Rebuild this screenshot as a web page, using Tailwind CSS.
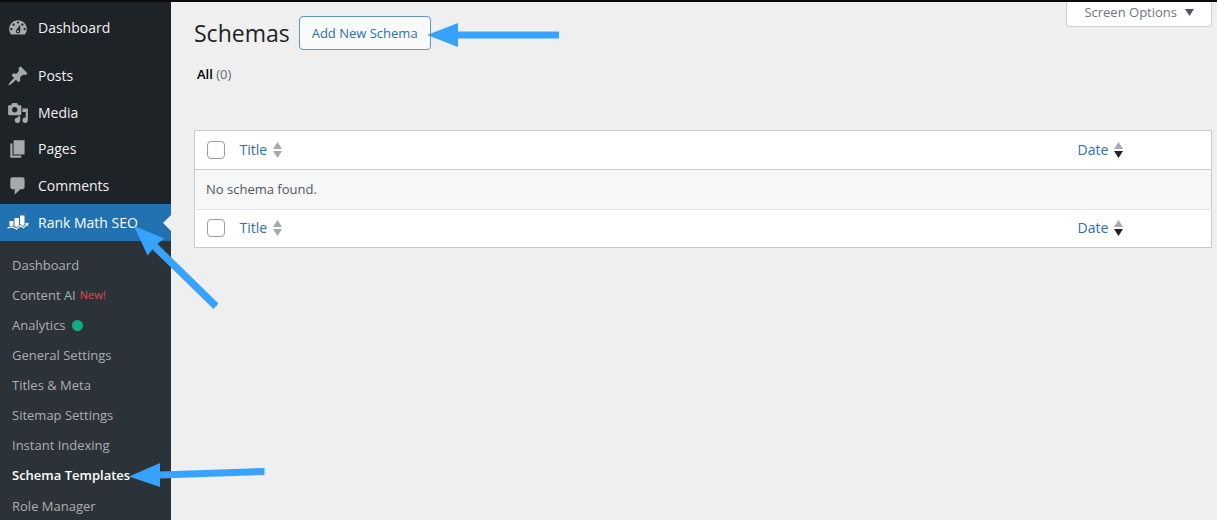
<!DOCTYPE html>
<html lang="en">
<head>
    <meta charset="utf-8">
    <title>Schemas</title>
    <meta name="viewport" content="width=device-width, initial-scale=1">
    <script src="https://cdn.jsdelivr.net/npm/@tailwindcss/browser@4"></script>
</head>
<body class="bg-[#efefef] font-['Open_Sans','Noto_Sans',sans-serif] text-sm text-[#50575e]">
    <div class="relative flex min-h-screen flex-col overflow-hidden">
        <!-- admin bar -->
        <div class="h-[2px] bg-[#0b0b0d]"></div>
        <div class="flex flex-1">
            <!-- sidebar -->
            <nav class="w-[171px] shrink-0 bg-[#2c3338] text-[#a9aeb3]">
                <ul class="bg-[#1d2327] pt-[7px] text-[#f0f0f1]">
                    <li class="mb-[11px]">
                        <a href="#" class="flex h-[37px] items-center gap-[9px] pl-[7px]">
                            <svg class="size-[22px] fill-[#a7aaad]" viewBox="0 0 20 20"><path d="M3.76 16h12.48c1.1-1.37 1.76-3.11 1.76-5 0-4.42-3.58-8-8-8s-8 3.58-8 8c0 1.89.66 3.63 1.76 5zM10 4c.55 0 1 .45 1 1s-.45 1-1 1-1-.45-1-1 .45-1 1-1zM6 6c.55 0 1 .45 1 1s-.45 1-1 1-1-.45-1-1 .45-1 1-1zm8 0c.55 0 1 .45 1 1s-.45 1-1 1-1-.45-1-1 .45-1 1-1zm-5.37 5.55L12 7v6c0 1.1-.9 2-2 2s-2-.9-2-2c0-.57.24-1.08.63-1.45zM4 10c.55 0 1 .45 1 1s-.45 1-1 1-1-.45-1-1 .45-1 1-1zm12 0c.55 0 1 .45 1 1s-.45 1-1 1-1-.45-1-1 .45-1 1-1zm-5 3c0-.55-.45-1-1-1s-1 .45-1 1 .45 1 1 1 1-.45 1-1z"/></svg>
                            Dashboard
                        </a>
                    </li>
                    <li>
                        <a href="#" class="flex h-[37px] items-center gap-[9px] pl-[7px]">
                            <svg class="size-[22px] fill-[#a7aaad]" viewBox="0 0 20 20"><path d="M10.44 3.02l1.82-1.82 6.36 6.35-1.83 1.82c-1.05-.68-2.48-.57-3.41.36l-.75.75c-.92.93-1.04 2.35-.35 3.41l-1.83 1.82-2.41-2.41-2.8 2.79c-.42.42-3.38 2.71-3.8 2.29s1.86-3.39 2.28-3.81l2.79-2.79L4.1 9.36l1.83-1.82c1.05.69 2.48.57 3.4-.36l.75-.75c.93-.92 1.05-2.35.36-3.41z"/></svg>
                            Posts
                        </a>
                    </li>
                    <li>
                        <a href="#" class="flex h-[37px] items-center gap-[9px] pl-[7px]">
                            <svg class="size-[22px] fill-[#a7aaad]" viewBox="0 0 20 20"><path d="M13 11V4c0-.55-.45-1-1-1h-1.67L9 1H5L3.67 3H2c-.55 0-1 .45-1 1v7c0 .55.45 1 1 1h10c.55 0 1-.45 1-1zM7 4.5c1.38 0 2.5 1.12 2.5 2.5S8.38 9.5 7 9.5 4.5 8.38 4.5 7 5.62 4.5 7 4.5zM14 6h5v10.5c0 1.38-1.12 2.5-2.5 2.5S14 17.88 14 16.5s1.12-2.5 2.5-2.5c.17 0 .34.02.5.05V9h-3V6zm-4 8.05V13h2v3.5c0 1.38-1.12 2.5-2.5 2.5S7 17.88 7 16.5 8.12 14 9.5 14c.17 0 .34.02.5.05z"/></svg>
                            Media
                        </a>
                    </li>
                    <li>
                        <a href="#" class="flex h-[36px] items-center gap-[9px] pl-[7px]">
                            <svg class="size-[22px] fill-[#a7aaad]" viewBox="0 0 20 20"><path d="M6 15V2h10v13H6zm-1 1h8v2H3V5h2v11z"/></svg>
                            Pages
                        </a>
                    </li>
                    <li>
                        <a href="#" class="flex h-[37px] items-center gap-[9px] pl-[7px]">
                            <svg class="size-[22px] fill-[#a7aaad]" viewBox="0 0 20 20"><path d="M5 2h9c1.1 0 2 .9 2 2v7c0 1.1-.9 2-2 2h-2l-5 5v-5H5c-1.1 0-2-.9-2-2V4c0-1.1.9-2 2-2z"/></svg>
                            Comments
                        </a>
                    </li>
                    <li>
                        <a href="#" class="relative flex h-[37px] items-center gap-[9px] bg-[#2271b1] pl-[7px] text-white">
                            <svg class="size-[22px] fill-white" viewBox="0 0 22 22"><path d="M2.500 9h4v4.500l-1 .2-3 .5zM7.500 6H12v7.200L9.800 15.300l-2.300-1.300zM13 3.500h4.500v8.800L16 14.200l-3-2.100z"/><path d="M.5 15.800l5-.9 4.200 2.200L13.200 13.800l3.200 2L20 12" fill="none" stroke="#fff" stroke-width="1.200"/><path d="M17.800 11.300l3.900-.5-1 3.600z"/></svg>
                            Rank Math SEO
                            <span class="absolute right-0 border-y-8 border-r-8 border-y-transparent border-r-[#efefef]"></span>
                        </a>
                    </li>
                </ul>
                <!-- submenu -->
                <ul class="pt-[9px] pl-3 text-[13px]">
                    <li><a href="#" class="flex h-[30px] items-center">Dashboard</a></li>
                    <li><a href="#" class="flex h-[30px] items-center gap-1">Content AI <span class="text-[11px] text-[#e2474d]">New!</span></a></li>
                    <li><a href="#" class="flex h-[30px] items-center gap-[6px]">Analytics <span class="size-[11px] rounded-full bg-[#10ac84]"></span></a></li>
                    <li><a href="#" class="flex h-[30px] items-center">General Settings</a></li>
                    <li><a href="#" class="flex h-[30px] items-center">Titles &amp; Meta</a></li>
                    <li><a href="#" class="flex h-[30px] items-center">Sitemap Settings</a></li>
                    <li><a href="#" class="flex h-[30px] items-center">Instant Indexing</a></li>
                    <li><a href="#" class="flex h-[31px] items-center font-semibold text-white">Schema Templates</a></li>
                    <li><a href="#" class="flex h-[30px] items-center">Role Manager</a></li>
                </ul>
            </nav>

            <!-- content -->
            <main class="min-w-0 flex-1 pr-[5px] pl-[23px]">
                <div class="flex items-start justify-between">
                    <div class="flex items-center gap-[9px] pt-[14px]">
                        <h1 class="text-[23px] leading-8 text-[#1d2327]">Schemas</h1>
                        <button class="h-[34px] rounded-[4px] border border-[#5f97c9] bg-[#f9fafa] px-3 text-[13px] text-[#2f6fab]">Add New Schema</button>
                    </div>
                    <button class="flex h-[25px] items-center gap-2 rounded-b-[4px] border border-t-0 border-[#cfd0d2] bg-white px-[17px] pb-1 text-[13px] text-[#70757a]">
                        Screen Options
                        <svg class="h-[7px] w-[9px] fill-[#50575e]" viewBox="0 0 9 7"><path d="M0 0h9L4.500 7z"/></svg>
                    </button>
                </div>
                <p class="mt-[15px] pl-[3px] text-[13px]"><a href="#" class="font-semibold text-black">All</a> <span class="text-[#646970]">(0)</span></p>

                <table class="mt-[46px] w-full border border-[#c9cccf] bg-white text-left">
                    <thead>
                        <tr class="h-[39px] border-b border-[#c9cccf]">
                            <td class="w-[45px] pl-3"><input type="checkbox" aria-label="Select all" class="block size-[18px] appearance-none rounded-[4px] border border-[#9a9da1] bg-white"></td>
                            <th class="font-normal"><a href="#" class="flex items-center gap-[6px] text-[#2f6fab]">Title
                                <svg class="h-4 w-[9px] fill-[#a7a9ac]" viewBox="0 0 9 16"><path d="M0 7h9L4.500 0zM0 9h9l-4.500 7z"/></svg></a></th>
                            <th class="w-[134px] font-normal"><a href="#" class="flex items-center gap-[6px] text-[#2f6fab]">Date
                                <svg class="h-4 w-[9px] fill-[#a7a9ac]" viewBox="0 0 9 16"><path d="M0 7h9L4.500 0z"/><path d="M0 9h9l-4.500 7z" fill="#1d2327"/></svg></a></th>
                        </tr>
                    </thead>
                    <tbody>
                        <tr class="h-10 bg-[#f6f7f7]"><td colspan="3" class="pl-[11px] text-[13px]">No schema found.</td></tr>
                    </tbody>
                    <tfoot>
                        <tr class="h-[38px] border-t border-[#e3e4e6]">
                            <td class="pl-3"><input type="checkbox" aria-label="Select all" class="block size-[18px] appearance-none rounded-[4px] border border-[#9a9da1] bg-white"></td>
                            <th class="font-normal"><a href="#" class="flex items-center gap-[6px] text-[#2f6fab]">Title
                                <svg class="h-4 w-[9px] fill-[#a7a9ac]" viewBox="0 0 9 16"><path d="M0 7h9L4.500 0zM0 9h9l-4.500 7z"/></svg></a></th>
                            <th class="font-normal"><a href="#" class="flex items-center gap-[6px] text-[#2f6fab]">Date
                                <svg class="h-4 w-[9px] fill-[#a7a9ac]" viewBox="0 0 9 16"><path d="M0 7h9L4.500 0z"/><path d="M0 9h9l-4.500 7z" fill="#1d2327"/></svg></a></th>
                        </tr>
                    </tfoot>
                </table>
            </main>
        </div>

        <!-- pointer arrows -->
        <svg class="pointer-events-none absolute top-0 left-0 h-[520px] w-[600px] fill-[#38a3ff]" viewBox="0 0 600 520">
            <path d="M427 35L458 23v8.500h101v7H458V47z"/>
            <path d="M134 226L164 238.500l-6.500 5.500 61 59.500-5 5.500-61-59.500-5 6z"/>
            <path d="M129 476.500L160 463v8.500l104.500-3.500v7L160 478.500V487z"/>
        </svg>
    </div>
</body>
</html>
